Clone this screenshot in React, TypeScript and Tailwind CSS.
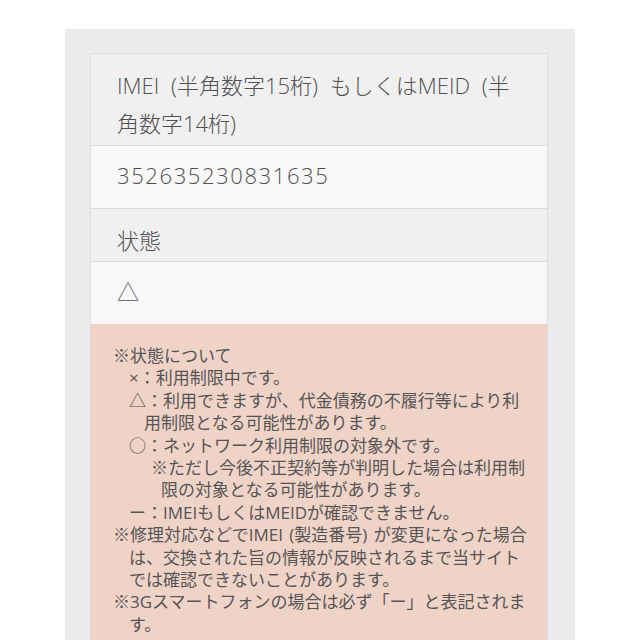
export default function App() {
  const notes: { indent: string; text: string }[] = [
    { indent: "ml-0", text: "※状態について" },
    { indent: "ml-[16px]", text: "×：利用制限中です。" },
    { indent: "ml-[16px]", text: "△：利用できますが、代金債務の不履行等により利" },
    { indent: "ml-[31px]", text: "用制限となる可能性があります。" },
    { indent: "ml-[16px]", text: "○：ネットワーク利用制限の対象外です。" },
    { indent: "ml-[38px]", text: "※ただし今後不正契約等が判明した場合は利用制" },
    { indent: "ml-[48px]", text: "限の対象となる可能性があります。" },
    { indent: "ml-[16px]", text: "ー：IMEIもしくはMEIDが確認できません。" },
    { indent: "ml-0", text: "※修理対応などでIMEI (製造番号) が変更になった場合" },
    { indent: "ml-[16px]", text: "は、交換された旨の情報が反映されるまで当サイト" },
    { indent: "ml-[16px]", text: "では確認できないことがあります。" },
    { indent: "ml-0", text: "※3Gスマートフォンの場合は必ず「ー」と表記されま" },
    { indent: "ml-[16px]", text: "す。" },
  ];

  return (
    <div
      className="w-[640px] h-[640px] overflow-hidden bg-white pt-[29px]"
      style={{ fontFamily: '"Open Sans", "Noto Sans CJK JP", sans-serif' }}
    >
      <div className="ml-[65px] w-[510px] h-[700px] bg-[#ebebed] pt-[24px] pl-[25px] pr-[27px]">
        <div className="border border-[#dcdcdc] text-[#505050]">
          {/* 見出し */}
          <div className="bg-[#f0f0f0] border-b border-[#dcdcdc] pt-[12px] pb-[3px] px-[26px] text-[22px] leading-[38px] font-light [word-spacing:6px]">
            IMEI (半角数字15桁) もしくはMEID (半
            <br />
            角数字14桁)
          </div>
          <div className="bg-[#f8f8f8] border-b border-[#dcdcdc] pt-[10px] pb-[14px] px-[26px] text-[22px] leading-[38px] tracking-[1.6px] font-light">
            352635230831635
          </div>
          <div className="bg-[#f0f0f0] border-b border-[#dcdcdc] pt-[12px] pb-[2px] px-[26px] text-[22px] leading-[38px] font-light">
            状態
          </div>
          <div className="bg-[#f8f8f8] pt-[10px] pb-[14px] px-[26px] text-[22px] leading-[38px] font-light">
            △
          </div>

          {/* 注意書き */}
          <div className="bg-[#f0d3c7] pt-[21px] pb-[20px] pl-[22px] text-[17px] leading-[22.4px] text-[#555] [word-spacing:2px]">
            {notes.map((n, i) => (
              <div key={i} className={`${n.indent} whitespace-nowrap`}>
                {n.text}
              </div>
            ))}
          </div>
        </div>
      </div>
    </div>
  );
}
